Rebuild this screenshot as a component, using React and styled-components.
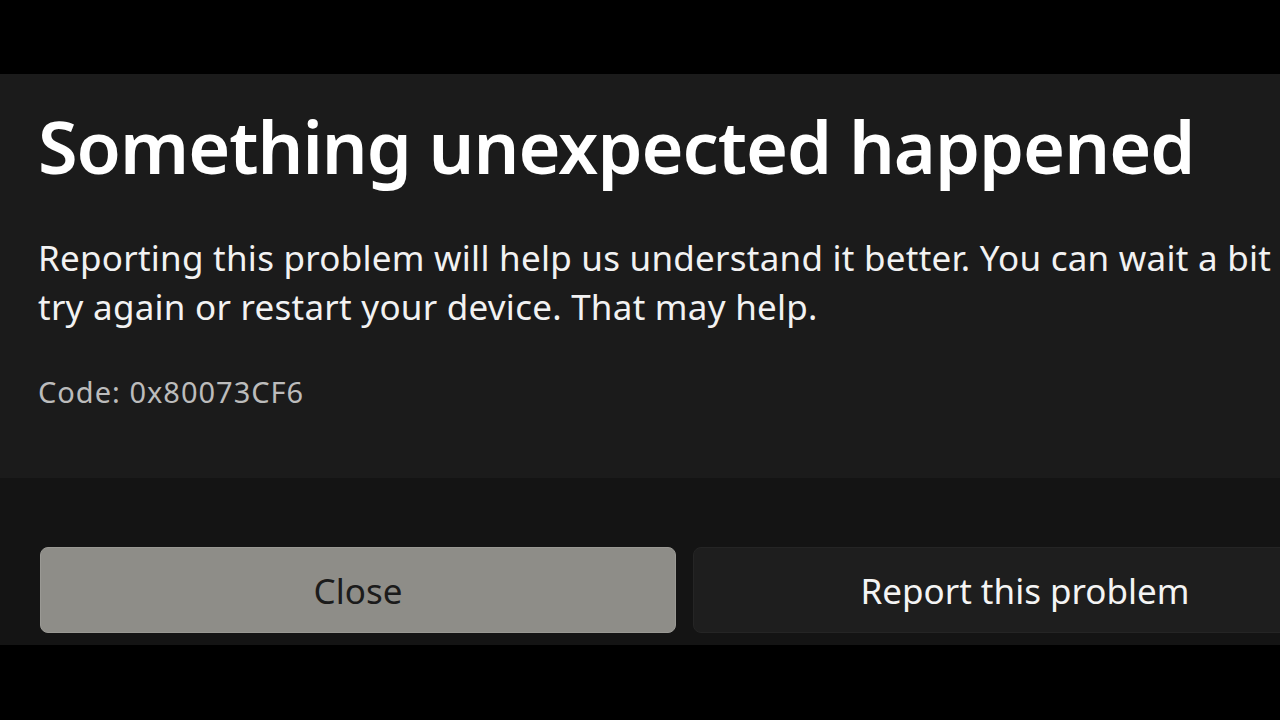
import styled, { createGlobalStyle } from "styled-components";

const GlobalStyle = createGlobalStyle`
  html, body {
    margin: 0;
    padding: 0;
    background: #000000;
    overflow: hidden;
  }
  body {
    width: 1280px;
    height: 720px;
    font-family: "Noto Sans", "Open Sans", sans-serif;
  }
`;

const Screen = styled.div`
  width: 1280px;
  height: 720px;
  overflow: hidden;
  background: #000000;
  display: flex;
  flex-direction: column;
`;

const TopBand = styled.div`
  height: 74px;
  flex: none;
  background: #000000;
`;

const Dialog = styled.div`
  width: 1420px;
  display: flex;
  flex-direction: column;
`;

const Content = styled.div`
  height: 404px;
  box-sizing: border-box;
  padding: 28px 38px 0 38px;
  background: #1b1b1b;
`;

const Title = styled.h1`
  margin: 0;
  font-size: 72px;
  line-height: 88px;
  font-weight: 600;
  letter-spacing: -1px;
  color: #ffffff;
  white-space: nowrap;
`;

const Message = styled.p`
  margin: 43px 0 0 0;
  font-size: 35px;
  line-height: 49px;
  font-weight: 400;
  letter-spacing: 0.25px;
  color: #f2f2f2;
  white-space: nowrap;
`;

const ErrorCode = styled.div`
  margin-top: 43px;
  font-size: 29px;
  line-height: 36px;
  letter-spacing: 1px;
  color: #bcbcbc;
`;

const Footer = styled.div`
  height: 167px;
  box-sizing: border-box;
  padding: 69px 0 0 40px;
  background: #141414;
  display: grid;
  grid-template-columns: 636px 664px;
  grid-template-rows: 86px;
  column-gap: 17px;
`;

const Button = styled.button`
  border: 1px solid ${(props) => (props.primary ? "#9a9994" : "#252525")};
  border-radius: 8px;
  background: ${(props) => (props.primary ? "#8e8d88" : "#1e1e1e")};
  color: ${(props) => (props.primary ? "#1b1b1b" : "#f4f4f4")};
  font-family: "Noto Sans", "Open Sans", sans-serif;
  font-size: 35px;
  font-weight: 400;
  display: flex;
  align-items: center;
  justify-content: center;
  padding: 0;
  cursor: pointer;
`;

export default function App() {
  return (
    <>
      <GlobalStyle />
      <Screen>
        <TopBand />
        <Dialog>
          <Content>
            <Title>Something unexpected happened</Title>
            <Message>
              Reporting this problem will help us understand it better. You can
              wait a bit and
              <br />
              try again or restart your device. That may help.
            </Message>
            <ErrorCode>Code: 0x80073CF6</ErrorCode>
          </Content>
          <Footer>
            <Button primary>Close</Button>
            <Button>Report this problem</Button>
          </Footer>
        </Dialog>
      </Screen>
    </>
  );
}
